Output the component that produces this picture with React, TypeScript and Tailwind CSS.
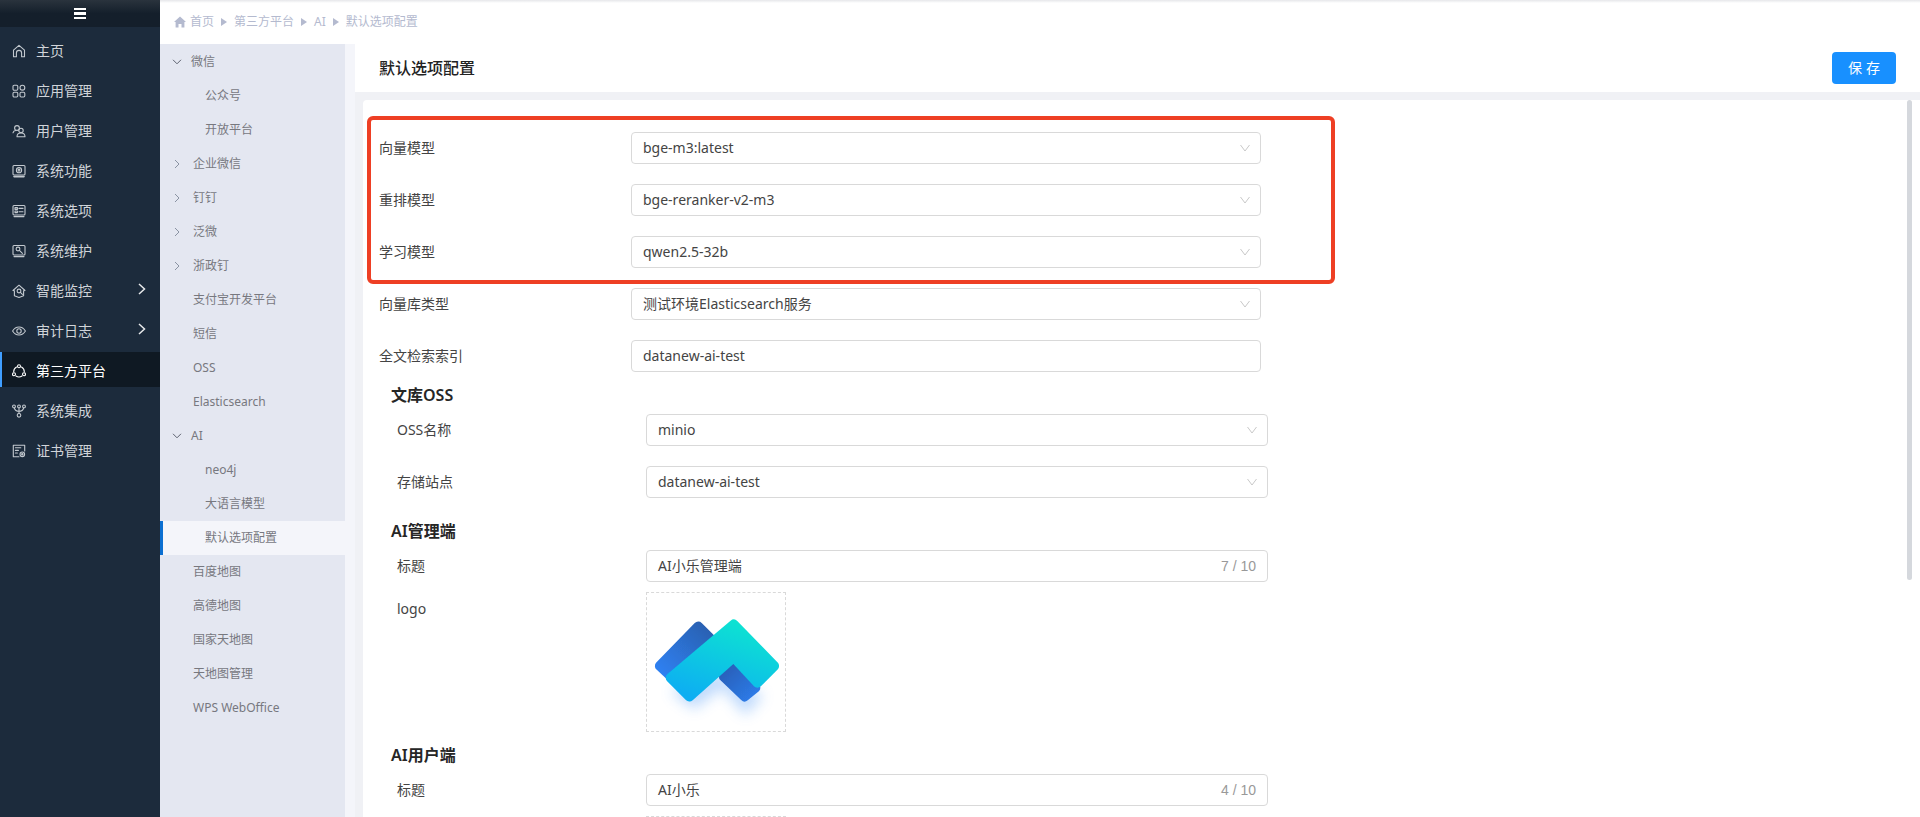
import React from 'react';

const FONT = "font-['Noto_Sans','Noto_Sans_CJK_SC',sans-serif]";

const Svg = ({ children }: { children: React.ReactNode }) => (
  <svg viewBox="0 0 14 14" className="w-[14px] h-[14px] shrink-0" fill="none" stroke="currentColor" strokeWidth="1.1" strokeLinejoin="round" strokeLinecap="round">
    {children}
  </svg>
);

const icons: Record<string, React.ReactNode> = {
  home: <path d="M1.5 6.2 7 1.3l5.5 4.9v6.5H9.6V9a2.6 2.6 0 0 0-5.2 0v3.7H1.5Z" />,
  apps: (
    <>
      <rect x="1" y="1.2" width="4.8" height="5" rx="1.2" />
      <circle cx="10.4" cy="3.7" r="2.4" />
      <rect x="1" y="8.2" width="4.8" height="4.8" rx="1.2" />
      <rect x="8" y="8.2" width="4.8" height="4.8" rx="1.2" />
    </>
  ),
  users: (
    <>
      <circle cx="5" cy="4" r="2.4" />
      <path d="M1 8.8c.3-1.4 1.5-2.2 2.7-2.3" />
      <circle cx="9" cy="6.4" r="2.2" />
      <path d="M5 12.8c0-2.4 1.8-3.8 4-3.8s4 1.4 4 3.8Z" />
    </>
  ),
  monitorDot: (
    <>
      <rect x="1" y="1.5" width="12" height="9.5" rx="1" />
      <circle cx="7" cy="6.2" r="2.6" />
      <circle cx="7" cy="6.2" r="0.9" />
      <path d="M2 12.6h10" strokeWidth="1.6" />
    </>
  ),
  monitorList: (
    <>
      <rect x="1" y="1.5" width="12" height="9.5" rx="1" />
      <rect x="3" y="3.6" width="2.4" height="1.8" />
      <rect x="3" y="7" width="2.4" height="1.6" />
      <path d="M7 4.4h4M7 7.8h4M2 12.6h10" />
    </>
  ),
  monitorTool: (
    <>
      <rect x="1" y="1.5" width="12" height="9.5" rx="1" />
      <circle cx="6" cy="5" r="1.9" />
      <path d="m7.4 6.4 3 3M2 12.6h10" />
    </>
  ),
  monitorHome: (
    <>
      <path d="M1 6.5 7 1.2l6 5.3-1.4.3v5l-4.6 1.6-4.6-1.6v-5Z" />
      <circle cx="7" cy="7" r="1.9" />
      <path d="m8.4 8.4 2 2" />
    </>
  ),
  eye: (
    <>
      <path d="M.6 7C2.2 4.3 4.4 3 7 3s4.8 1.3 6.4 4c-1.6 2.7-3.8 4-6.4 4S2.200 9.700.6 7Z" />
      <circle cx="7" cy="7" r="2.2" />
    </>
  ),
  nodes: (
    <>
      <path d="M4.500 3A5.400 5.400 0 0 0 1.700 7.800M9.500 3a5.400 5.400 0 0 1 2.800 4.800M4 12a5.400 5.400 0 0 0 6 0" />
      <circle cx="7" cy="2.200" r="1.500" />
      <circle cx="2" cy="10.300" r="1.500" />
      <circle cx="12" cy="10.300" r="1.500" />
    </>
  ),
  fork: (
    <>
      <circle cx="2" cy="2.400" r="1.400" />
      <circle cx="7" cy="2.400" r="1.400" />
      <circle cx="12" cy="2.400" r="1.400" />
      <circle cx="7" cy="11.300" r="1.800" />
      <path d="M2.300 4c.6 2.300 2.400 3.300 4.700 3.300S11.100 6.300 11.700 4M7 4v5.500" />
    </>
  ),
  cert: (
    <>
      <path d="M7 12.700H1.300V1.300h11.400V7" />
      <path d="M3.400 3.800h5.400M3.400 6.400h3M3.400 9h2" />
      <circle cx="10.300" cy="10.300" r="2.300" />
      <circle cx="10.300" cy="10.300" r="0.700" />
    </>
  ),
};

const mainMenu = [
  { label: '主页', icon: 'home' },
  { label: '应用管理', icon: 'apps' },
  { label: '用户管理', icon: 'users' },
  { label: '系统功能', icon: 'monitorDot' },
  { label: '系统选项', icon: 'monitorList' },
  { label: '系统维护', icon: 'monitorTool' },
  { label: '智能监控', icon: 'monitorHome', arrow: true },
  { label: '审计日志', icon: 'eye', arrow: true },
  { label: '第三方平台', icon: 'nodes', active: true },
  { label: '系统集成', icon: 'fork' },
  { label: '证书管理', icon: 'cert' },
];

type SubItem = { label: string; kind: 'open' | 'closed' | 'leaf' | 'sub'; active?: boolean };

const subMenu: SubItem[] = [
  { label: '微信', kind: 'open' },
  { label: '公众号', kind: 'sub' },
  { label: '开放平台', kind: 'sub' },
  { label: '企业微信', kind: 'closed' },
  { label: '钉钉', kind: 'closed' },
  { label: '泛微', kind: 'closed' },
  { label: '浙政钉', kind: 'closed' },
  { label: '支付宝开发平台', kind: 'leaf' },
  { label: '短信', kind: 'leaf' },
  { label: 'OSS', kind: 'leaf' },
  { label: 'Elasticsearch', kind: 'leaf' },
  { label: 'AI', kind: 'open' },
  { label: 'neo4j', kind: 'sub' },
  { label: '大语言模型', kind: 'sub' },
  { label: '默认选项配置', kind: 'sub', active: true },
  { label: '百度地图', kind: 'leaf' },
  { label: '高德地图', kind: 'leaf' },
  { label: '国家天地图', kind: 'leaf' },
  { label: '天地图管理', kind: 'leaf' },
  { label: 'WPS WebOffice', kind: 'leaf' },
];

const SideNav = () => (
  <aside className="w-40 shrink-0 bg-[#1c2b3c] flex flex-col">
    <div className="h-[27px] bg-gradient-to-b from-[#2a333d] via-[#141f2b] to-[#141f2b] flex items-center justify-center mb-1">
      <div className="w-3 flex flex-col gap-[2px]">
        <span className="h-[2.500px] bg-white" />
        <span className="h-[2.500px] bg-white" />
        <span className="h-[2.500px] bg-white" />
      </div>
    </div>
    {mainMenu.map((m) => (
      <div key={m.label} className="h-10">
        <div
          className={
            'mt-px h-[35px] pt-[2px] flex items-center text-sm border-l-2 pl-[10px] ' +
            (m.active ? 'bg-[#0f1923] border-[#409eff] text-white' : 'border-transparent text-[#d0d4d9]')
          }
        >
          <span className={m.active ? 'text-white' : 'text-[#c3c9cf]'}>
            <Svg>{icons[m.icon]}</Svg>
          </span>
          <span className="ml-[10px]">{m.label}</span>
          {m.arrow && (
            <svg viewBox="0 0 8 12" className="w-2 h-3 ml-auto mr-[14px] -mt-[3px]" fill="none" stroke="#e6e8ea" strokeWidth="1.500">
              <path d="m1 1 5.500 5L1 11" />
            </svg>
          )}
        </div>
      </div>
    ))}
  </aside>
);

const SubNav = () => (
  <div className="w-[185px] shrink-0 bg-[#e4e7f1] pt-px text-xs text-[#77787f]">
    {subMenu.map((s) => (
      <div
        key={s.label}
        className={
          'h-[34px] flex items-center ' +
          (s.active ? 'bg-[#f4f5fa] border-l-[3px] border-[#0b6fd1] pl-[42px]' : '') +
          (s.kind === 'sub' && !s.active ? 'pl-[45px]' : '') +
          (s.kind === 'leaf' ? 'pl-[33px]' : '') +
          (s.kind === 'open' ? 'pl-3' : '') +
          (s.kind === 'closed' ? 'pl-[14px]' : '')
        }
      >
        {s.kind === 'open' && (
          <svg viewBox="0 0 10 6" className="w-[10px] h-[6px] mr-[9px]" fill="none" stroke="#5d6270" strokeWidth="1">
            <path d="m1 .8 4 4 4-4" />
          </svg>
        )}
        {s.kind === 'closed' && (
          <svg viewBox="0 0 6 10" className="w-[6px] h-[10px] mr-[13px]" fill="none" stroke="#8a93a3" strokeWidth="1">
            <path d="m1 1 4 4-4 4" />
          </svg>
        )}
        {s.label}
      </div>
    ))}
  </div>
);

const Caret = () => (
  <svg viewBox="0 0 6 8" className="w-[6px] h-2 mx-[7px]" fill="#b4bacf">
    <path d="M0 0v8l6-4Z" />
  </svg>
);

const Breadcrumb = () => (
  <div className="h-[41px] bg-white flex items-center pl-[14px] pb-[3px] text-xs text-[#b4bacf]">
    <svg viewBox="0 0 12 12" className="w-3 h-3 mr-1" fill="#b4bacf">
      <path d="M6 .5 12 6h-1.600v5.500H7.500V8h-3v3.500H1.600V6H0Z" />
    </svg>
    <span>首页</span>
    <Caret />
    <span>第三方平台</span>
    <Caret />
    <span>AI</span>
    <Caret />
    <span>默认选项配置</span>
  </div>
);

const SelectBox = ({ value, w }: { value: string; w: string }) => (
  <div className={'h-8 border border-[#d9d9d9] rounded-sm flex items-center pl-[11px] pr-[10px] text-sm text-[#444] ' + w}>
    <span className="flex-1">{value}</span>
    <svg viewBox="0 0 10 8" className="w-[10px] h-2" fill="none" stroke="#c8c8c8" strokeWidth="1">
      <path d="m.5 1 4.500 6 4.500-6" />
    </svg>
  </div>
);

const CountInput = ({ value, count }: { value: string; count: string }) => (
  <div className="h-8 w-[622px] border border-[#d9d9d9] rounded-sm flex items-center pl-[11px] pr-[11px] text-sm text-[#444]">
    <span className="flex-1">{value}</span>
    <span className="font-['Liberation_Sans',sans-serif] text-[#999]">{count}</span>
  </div>
);

const Row = ({ label, children }: { label: string; children: React.ReactNode }) => (
  <div className="flex items-center text-sm text-[#444]">
    <div className="w-[252px]">{label}</div>
    {children}
  </div>
);

const SubRow = ({ label, children }: { label: string; children: React.ReactNode }) => (
  <div className="flex items-center text-sm text-[#444]">
    <div className="w-[255px] pl-[6px]">{label}</div>
    {children}
  </div>
);

const Heading = ({ children }: { children: React.ReactNode }) => (
  <div className="h-6 leading-6 text-base font-semibold text-[#262626] mb-[7px]">{children}</div>
);

const Logo = () => (
  <svg viewBox="0 0 140 140" className="w-full h-full">
    <defs>
      <linearGradient id="dark" x1="0" y1="1" x2="1" y2="0">
        <stop offset="0" stopColor="#2f82f5" />
        <stop offset="1" stopColor="#2a5fae" />
      </linearGradient>
      <linearGradient id="dark2" x1="0" y1="0" x2="1" y2="1">
        <stop offset="0" stopColor="#2a5fb8" />
        <stop offset="1" stopColor="#2d7be8" />
      </linearGradient>
      <linearGradient id="teal" x1="0.2" y1="1" x2="0.7" y2="0">
        <stop offset="0" stopColor="#08aef2" />
        <stop offset="1" stopColor="#0be2d2" />
      </linearGradient>
      <filter id="soft" x="-10%" y="-10%" width="120%" height="120%">
        <feGaussianBlur stdDeviation="0.8" />
      </filter>
      <filter id="glow" x="-40%" y="-40%" width="180%" height="180%">
        <feGaussianBlur stdDeviation="7" />
      </filter>
    </defs>
    <path d="M24 100 48 118 76 96 100 124 118 104 70 80Z" fill="#5ea2f8" opacity="0.4" filter="url(#glow)" />
    <g filter="url(#soft)" strokeLinejoin="round" strokeWidth="10">
      <path d="M13 74 52 34 66 48 26 86Z" fill="url(#dark)" stroke="url(#dark)" />
      <path d="M88 76 110 96 99 105 78 85Z" fill="url(#dark2)" stroke="url(#dark2)" />
      <path d="M24 86 88 32 129 74 112 91 88 65 43 105Z" fill="url(#teal)" stroke="url(#teal)" />
    </g>
  </svg>
);

const FormCard = () => (
  <div className="relative flex-1 ml-2 bg-white rounded-tl-sm pl-4 pt-8 overflow-hidden">
    <div className="flex flex-col gap-5">
      <Row label="向量模型"><SelectBox value="bge-m3:latest" w="w-[630px]" /></Row>
      <Row label="重排模型"><SelectBox value="bge-reranker-v2-m3" w="w-[630px]" /></Row>
      <Row label="学习模型"><SelectBox value="qwen2.5-32b" w="w-[630px]" /></Row>
      <Row label="向量库类型"><SelectBox value="测试环境Elasticsearch服务" w="w-[630px]" /></Row>
      <Row label="全文检索索引">
        <div className="h-8 w-[630px] border border-[#d9d9d9] rounded-sm flex items-center pl-[11px]">datanew-ai-test</div>
      </Row>
    </div>

    <div className="ml-3 mt-[11px]">
      <Heading>文库OSS</Heading>
      <div className="flex flex-col gap-5">
        <SubRow label="OSS名称"><SelectBox value="minio" w="w-[622px]" /></SubRow>
        <SubRow label="存储站点"><SelectBox value="datanew-ai-test" w="w-[622px]" /></SubRow>
      </div>

      <div className="mt-[21px]">
        <Heading>AI管理端</Heading>
        <SubRow label="标题"><CountInput value="AI小乐管理端" count="7 / 10" /></SubRow>
        <div className="flex mt-[10px] text-sm text-[#444]">
          <div className="w-[255px] pl-[6px] mt-[7px]">logo</div>
          <div className="w-[140px] h-[140px] border border-dashed border-[#d9d9d9]">
            <Logo />
          </div>
        </div>
      </div>

      <div className="mt-[11px]">
        <Heading>AI用户端</Heading>
        <SubRow label="标题"><CountInput value="AI小乐" count="4 / 10" /></SubRow>
        <div className="flex mt-[10px]">
          <div className="w-[255px]" />
          <div className="w-[140px] h-[140px] border border-dashed border-[#d9d9d9]" />
        </div>
      </div>
    </div>

    {/* red annotation around the model selects */}
    <div className="absolute left-1 top-4 w-[968px] h-[168px] border-4 border-[#ee3f24] rounded-md pointer-events-none" />
    {/* scrollbar */}
    <div className="absolute right-2 top-0 w-[5px] h-[480px] bg-[#d5d8dd] rounded-full" />
  </div>
);

export default function App() {
  return (
    <div className={'w-[1920px] h-[817px] flex overflow-hidden bg-white ' + FONT}>
      <SideNav />
      <div className="flex-1 flex flex-col min-w-0">
        <div className="h-[3px] bg-gradient-to-b from-[#e6e7ea] to-white" />
        <Breadcrumb />
        <div className="flex-1 flex min-h-0">
          <SubNav />
          <div className="w-[10px] shrink-0 bg-[#f4f5fa]" />
          <div className="flex-1 flex flex-col bg-[#f0f1f5] min-w-0">
            <div className="h-12 shrink-0 bg-white flex items-center justify-between pl-6 pr-6">
              <div className="text-base font-medium text-[#222]">默认选项配置</div>
              <button className="w-16 h-8 bg-[#1890ff] text-white text-sm rounded-sm tracking-[4px] pl-1">保存</button>
            </div>
            <div className="h-2 shrink-0" />
            <FormCard />
          </div>
        </div>
      </div>
    </div>
  );
}
